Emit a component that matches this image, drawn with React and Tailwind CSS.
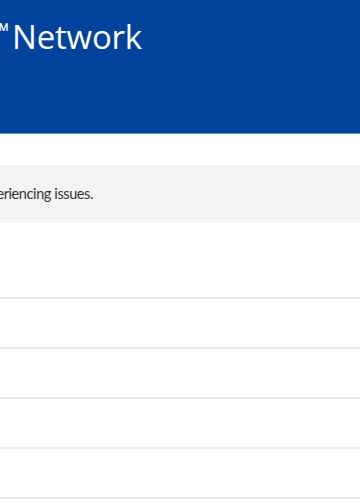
import React from 'react';

const rows = [0, 1, 2, 3, 4];

export default function App() {
  return (
    <div className="w-[360px] h-[504px] overflow-hidden bg-white font-['Open_Sans',sans-serif]">
      {/* Header */}
      <div className="h-[134px] bg-[#00439c] border-b border-[#5f93cc] overflow-hidden">
        <div className="w-[142px] flex justify-end pt-[8px]">
          <h1 className="shrink-0 whitespace-nowrap text-[33px] leading-[44px] text-white font-normal tracking-[-0.2px]">
            PlayStation<span className="text-[22px] align-[10px] mr-[3px]">™</span>Network
          </h1>
        </div>
      </div>

      <div className="h-[31px]" />

      {/* Notice */}
      <div className="h-[55px] bg-[#f3f3f3] flex items-center overflow-hidden">
        <div className="w-[93px] flex justify-end">
          <p className="shrink-0 whitespace-nowrap font-['Lato',sans-serif] text-[14.5px] tracking-[-0.4px] text-[#333] pt-[2px]">
            Some users may be experiencing issues.
          </p>
        </div>
      </div>

      {/* Service rows */}
      <div className="border-t border-[#f0f0f0] mt-px">
        <div className="h-[77px] border-b-2 border-[#ebebeb]" />
        {rows.map((r) => (
          <div key={r} className="h-[50px] border-b-2 border-[#ebebeb]" />
        ))}
      </div>
    </div>
  );
}
